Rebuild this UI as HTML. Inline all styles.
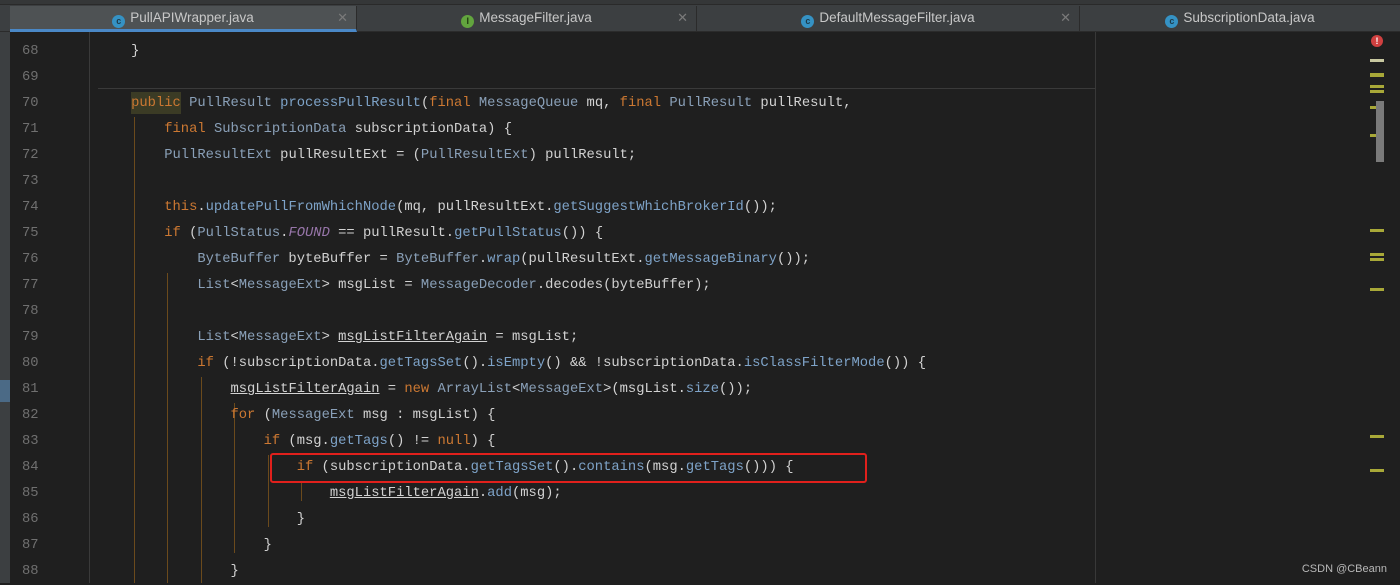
<!DOCTYPE html>
<html><head><meta charset="utf-8"><style>
*{margin:0;padding:0;box-sizing:border-box}
body{width:1400px;height:583px;overflow:hidden;background:#1f1f1f;position:relative;font-family:"Liberation Mono",monospace}
.tabs{position:absolute;left:0;top:0;width:1400px;height:32px;background:#3c3f41;border-bottom:1px solid #2b2b2b}
.top{position:absolute;left:0;top:0;width:1400px;height:5px;background:#353738;border-bottom:1px solid #2a2a2a}
.tab{position:absolute;top:6px;height:26px;font-family:"Liberation Sans",sans-serif;font-size:13.5px;color:#c8c8c8;line-height:24px;text-align:center;border-right:1px solid #2b2b2b}
.tab .ic{display:inline-block;width:13px;height:13px;border-radius:50%;background:#3592c4;color:#1c3a4a;font-size:9px;line-height:13px;text-align:center;vertical-align:-2px;margin-right:5px;font-weight:bold}
.tab .x{position:absolute;right:8px;top:0;color:#7a7a7a;font-size:13px}
.left{position:absolute;left:0;top:32px;width:10px;height:551px;background:#3c3f41}
.ln{position:absolute;left:22px;width:30px;font-size:13.8px;color:#707070;line-height:26px}
.code{position:absolute;left:98px;font-size:13.8px;line-height:26px;color:#d2d2d2;white-space:pre}
.k{color:#cc7832}.t{color:#8aa0b8}.m{color:#7ea3c8}.p{color:#9876aa;font-style:italic}.u{text-decoration:underline}
.g{position:absolute;width:1px;background:#6b4a1c}
.mk{position:absolute;left:1370px;width:14px;height:3px;background:#a8a838}
</style></head><body>
<div class="tabs"><div class="top"></div>
<div class="tab" style="left:10px;width:347px;background:#4e5254;border-bottom:3px solid #4a88c7"><span class="ic">c</span>PullAPIWrapper.java<span class="x">✕</span></div>
<div class="tab" style="left:357px;width:340px"><span class="ic" style="background:#62a53e;color:#1e3a10">I</span>MessageFilter.java<span class="x">✕</span></div>
<div class="tab" style="left:697px;width:383px"><span class="ic">c</span>DefaultMessageFilter.java<span class="x">✕</span></div>
<div class="tab" style="left:1080px;width:320px;border-right:none"><span class="ic">c</span>SubscriptionData.java</div>
</div>
<div class="left"><div style="position:absolute;top:348px;width:10px;height:22px;background:#4b6a86"></div></div>
<div style="position:absolute;left:89px;top:32px;width:1px;height:551px;background:#3a3a3a"></div>
<div style="position:absolute;left:1095px;top:32px;width:1px;height:551px;background:#383838"></div>
<div style="position:absolute;left:98px;top:88px;width:997px;height:1px;background:#3a3a3a"></div>
<div style="position:absolute;left:131px;top:92px;width:50px;height:22px;background:#3b3b25"></div>
<div class="g" style="left:134px;top:117px;height:466px"></div>
<div class="g" style="left:167px;top:273px;height:310px"></div>
<div class="g" style="left:201px;top:377px;height:206px"></div>
<div class="g" style="left:234px;top:403px;height:150px"></div>
<div class="g" style="left:268px;top:455px;height:72px"></div>
<div class="g" style="left:301px;top:481px;height:20px"></div>
<div class="ln">
<div style="position:absolute;top:39px">68</div><div style="position:absolute;top:65px">69</div><div style="position:absolute;top:91px">70</div><div style="position:absolute;top:117px">71</div><div style="position:absolute;top:143px">72</div><div style="position:absolute;top:169px">73</div><div style="position:absolute;top:195px">74</div><div style="position:absolute;top:221px">75</div><div style="position:absolute;top:247px">76</div><div style="position:absolute;top:273px">77</div><div style="position:absolute;top:299px">78</div><div style="position:absolute;top:325px">79</div><div style="position:absolute;top:351px">80</div><div style="position:absolute;top:377px">81</div><div style="position:absolute;top:403px">82</div><div style="position:absolute;top:429px">83</div><div style="position:absolute;top:455px">84</div><div style="position:absolute;top:481px">85</div><div style="position:absolute;top:507px">86</div><div style="position:absolute;top:533px">87</div><div style="position:absolute;top:559px">88</div>
</div>
<div class="code" style="top:39px">    }

    <span class="k">public</span> <span class="t">PullResult</span> <span class="m">processPullResult</span>(<span class="k">final</span> <span class="t">MessageQueue</span> mq, <span class="k">final</span> <span class="t">PullResult</span> pullResult,
        <span class="k">final</span> <span class="t">SubscriptionData</span> subscriptionData) {
        <span class="t">PullResultExt</span> pullResultExt = (<span class="t">PullResultExt</span>) pullResult;

        <span class="k">this</span>.<span class="m">updatePullFromWhichNode</span>(mq, pullResultExt.<span class="m">getSuggestWhichBrokerId</span>());
        <span class="k">if</span> (<span class="t">PullStatus</span>.<span class="p">FOUND</span> == pullResult.<span class="m">getPullStatus</span>()) {
            <span class="t">ByteBuffer</span> byteBuffer = <span class="t">ByteBuffer</span>.<span class="m">wrap</span>(pullResultExt.<span class="m">getMessageBinary</span>());
            <span class="t">List</span>&lt;<span class="t">MessageExt</span>&gt; msgList = <span class="t">MessageDecoder</span>.decodes(byteBuffer);

            <span class="t">List</span>&lt;<span class="t">MessageExt</span>&gt; <span class="u">msgListFilterAgain</span> = msgList;
            <span class="k">if</span> (!subscriptionData.<span class="m">getTagsSet</span>().<span class="m">isEmpty</span>() &amp;&amp; !subscriptionData.<span class="m">isClassFilterMode</span>()) {
                <span class="u">msgListFilterAgain</span> = <span class="k">new</span> <span class="t">ArrayList</span>&lt;<span class="t">MessageExt</span>&gt;(msgList.<span class="m">size</span>());
                <span class="k">for</span> (<span class="t">MessageExt</span> msg : msgList) {
                    <span class="k">if</span> (msg.<span class="m">getTags</span>() != <span class="k">null</span>) {
                        <span class="k">if</span> (subscriptionData.<span class="m">getTagsSet</span>().<span class="m">contains</span>(msg.<span class="m">getTags</span>())) {
                            <span class="u">msgListFilterAgain</span>.<span class="m">add</span>(msg);
                        }
                    }
                }</div>
<div style="position:absolute;left:270px;top:453px;width:597px;height:30px;border:2.5px solid #e0201c;border-radius:3px"></div>
<div style="position:absolute;left:1371px;top:35px;width:12px;height:12px;border-radius:50%;background:#d04040;color:#fff;font:bold 9px 'Liberation Sans',sans-serif;text-align:center;line-height:12px">!</div>
<div class="mk" style="top:59px;background:#c8c8a0"></div>
<div class="mk" style="top:73px;height:4px"></div>
<div class="mk" style="top:85px"></div><div class="mk" style="top:90px"></div>
<div class="mk" style="top:106px"></div><div class="mk" style="top:134px"></div>
<div class="mk" style="top:229px"></div><div class="mk" style="top:253px"></div><div class="mk" style="top:258px"></div>
<div class="mk" style="top:288px"></div><div class="mk" style="top:435px"></div><div class="mk" style="top:469px"></div>
<div style="position:absolute;left:1376px;top:101px;width:8px;height:61px;background:#7a7a7a"></div>
<div style="position:absolute;right:13px;top:563px;font:11px 'Liberation Sans',sans-serif;color:#b8b8b8;white-space:nowrap">CSDN @CBeann</div>
</body></html>
